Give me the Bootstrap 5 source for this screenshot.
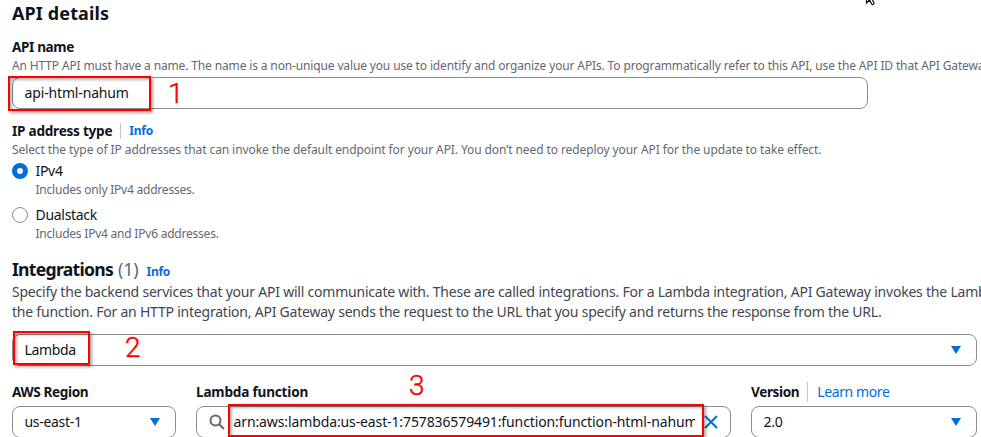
<!DOCTYPE html>
<html lang="en">
<head>
<meta charset="utf-8">
<meta name="viewport" content="width=device-width, initial-scale=1">
<title>API details</title>
<link href="https://cdn.jsdelivr.net/npm/bootstrap@5.3.0/dist/css/bootstrap.min.css" rel="stylesheet">
<style>
body{font-family:"Noto Sans","Open Sans",sans-serif;font-size:14px;line-height:20px;letter-spacing:-.21px;color:#0f141a;background:#fff;height:437px;overflow:hidden}
.page{width:965px;margin-left:12px;padding-top:3px}
.title{font-size:18px;line-height:20px;font-weight:700;letter-spacing:.12px;margin-bottom:14px}
.int-head{height:20px;margin:17px 0 3px}
.title-int{font-size:17.6px;letter-spacing:-.72px}
.count{font-weight:400;color:#656871;letter-spacing:-.2px;font-size:18px;margin-left:1px}
.field-label{font-size:13.6px;line-height:20px;font-weight:700;letter-spacing:-.38px}
.label-ip{letter-spacing:-.25px}
.label-fn{letter-spacing:-.2px}
.help{font-size:12px;line-height:16px;letter-spacing:-.09px;color:#656871;white-space:nowrap;margin-top:1px}
.help-long{letter-spacing:-.14px}
.help-short{letter-spacing:-.22px}
.bleed{width:969px;overflow:hidden}
.info{font-size:12px;font-weight:700;letter-spacing:-.25px;color:#006ce0;text-decoration:none}
.learn{color:#006ce0;text-decoration:none;letter-spacing:-.4px}
.split{width:1px;background:#c6c6cd}
.split-ip{margin:2px 8px}
.split-ver{margin:0 9px 0 8px}
.control{height:32px;border:1px solid #8c8c94;border-radius:8px;padding:0 12px 0 11.5px;background:#fff}
.name-field{width:856px;margin-top:3px;letter-spacing:-.15px}
.caret{margin-right:3px}
.radio-row{margin-top:3px;height:20px;letter-spacing:-.3px}
.indent + .radio-row{margin-top:7px}
.radio-dot{width:16px;height:16px;border:1px solid #8c8c94;border-radius:50%;margin-right:7.5px}
.radio-on{border:5px solid #006ce0}
.indent{padding-left:23.5px}
.desc{color:#424650;white-space:nowrap;letter-spacing:-.22px}
.kind{margin-top:12px;letter-spacing:-.35px}
.targets{margin-top:16px;gap:20px}
.targets .control{margin-top:4px}
.region{width:164px;letter-spacing:-.3px}
.fn{width:535px}
.ver{width:226px}
.lens{margin-right:9px}
.arn{width:461px;overflow:hidden;white-space:nowrap;letter-spacing:-.115px}
.callout{position:absolute;border:2px solid #f00;box-shadow:2px 2px 3px rgba(0,0,0,.35),inset 2px 2px 3px rgba(0,0,0,.3);pointer-events:none}
.callout-a{left:8px;top:76px;width:143px;height:35px}
.callout-b{left:13px;top:331px;width:77px;height:34px}
.callout-c{left:228px;top:404px;width:476px;height:33px}
.step{position:absolute;font:300 28px/28px Roboto,"Noto Sans",sans-serif;letter-spacing:0;color:#f00;-webkit-text-stroke:.45px #f00}
.step-a{left:168px;top:80px}
.step-b{left:125px;top:334px}
.step-c{left:409px;top:372px}
.pointer{position:absolute;left:865px;top:0}
</style>
</head>
<body class="position-relative">
<main class="page">
  <h2 class="title">API details</h2>
  <div class="field-label">API name</div>
  <div class="help help-long bleed">An HTTP API must have a name. The name is a non-unique value you use to identify and organize your APIs. To programmatically refer to this API, use the API ID that API Gateway</div>
  <div class="control name-field d-flex align-items-center">api-html-nahum</div>

  <div class="d-flex mt-2 pt-1">
    <div class="field-label label-ip">IP address type</div>
    <span class="split split-ip align-self-stretch"></span>
    <a href="#" class="info">Info</a>
  </div>
  <div class="help">Select the type of IP addresses that can invoke the default endpoint for your API. You don’t need to redeploy your API for the update to take effect.</div>
  <div class="d-flex align-items-center radio-row"><span class="radio-dot radio-on"></span>IPv4</div>
  <div class="help help-short indent">Includes only IPv4 addresses.</div>
  <div class="d-flex align-items-center radio-row"><span class="radio-dot"></span>Dualstack</div>
  <div class="help help-short indent">Includes IPv4 and IPv6 addresses.</div>

  <div class="d-flex align-items-baseline int-head">
    <h2 class="title title-int m-0">Integrations <span class="count">(1)</span></h2>
    <a href="#" class="info ms-2">Info</a>
  </div>
  <div class="desc bleed">Specify the backend services that your API will communicate with. These are called integrations. For a Lambda integration, API Gateway invokes the Lambda<br>the function. For an HTTP integration, API Gateway sends the request to the URL that you specify and returns the response from the URL.</div>
  <div class="control kind d-flex align-items-center justify-content-between">Lambda
    <svg class="caret" width="10" height="8" viewBox="0 0 10 8"><path d="M0 0H10L5 8Z" fill="#006ce0"/></svg>
  </div>

  <div class="d-flex targets">
    <div class="region">
      <div class="field-label">AWS Region</div>
      <div class="control d-flex align-items-center justify-content-between">us-east-1
        <svg class="caret" width="10" height="8" viewBox="0 0 10 8"><path d="M0 0H10L5 8Z" fill="#006ce0"/></svg>
      </div>
    </div>
    <div class="fn">
      <div class="field-label label-fn">Lambda function</div>
      <div class="control d-flex align-items-center">
        <svg class="lens" width="16" height="16" viewBox="0 0 16 16" fill="none" stroke="#656871" stroke-width="2"><circle cx="6.5" cy="6.5" r="5"/><path d="M10.2 10.2L15 15"/></svg>
        <span class="arn">arn:aws:lambda:us-east-1:757836579491:function:function-html-nahum</span>
        <svg class="ms-auto" width="14" height="14" viewBox="0 0 14 14" fill="none" stroke="#006ce0" stroke-width="2"><path d="M1 1L13 13M13 1L1 13"/></svg>
      </div>
    </div>
    <div class="ver">
      <div class="d-flex">
        <div class="field-label">Version</div>
        <span class="split split-ver align-self-stretch"></span>
        <a href="#" class="learn">Learn more</a>
      </div>
      <div class="control d-flex align-items-center justify-content-between">2.0
        <svg class="caret" width="10" height="8" viewBox="0 0 10 8"><path d="M0 0H10L5 8Z" fill="#006ce0"/></svg>
      </div>
    </div>
  </div>
</main>
<div class="callout callout-a"></div>
<div class="callout callout-b"></div>
<div class="callout callout-c"></div>
<div class="step step-a">1</div>
<div class="step step-b">2</div>
<div class="step step-c">3</div>
<svg class="pointer" width="14" height="6" viewBox="0 0 14 6" fill="none" stroke="#111" stroke-width="1.2"><path d="M1.5 0V3L4.5 0L7 4.5Q9 5 9 3L7.5 0"/></svg>
<script src="https://cdn.jsdelivr.net/npm/bootstrap@5.3.0/dist/js/bootstrap.bundle.min.js"></script>
</body>
</html>
